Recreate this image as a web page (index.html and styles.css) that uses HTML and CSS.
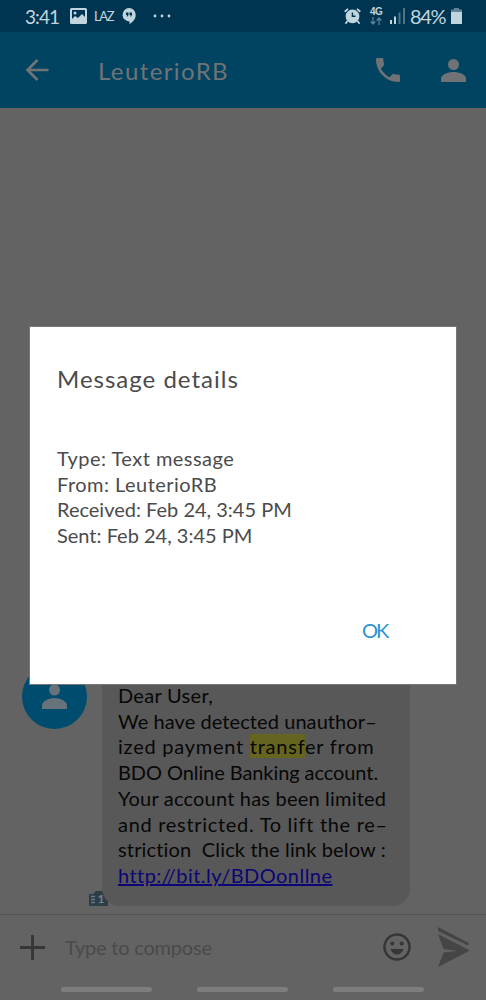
FILE: index.html
```html
<!DOCTYPE html>
<html lang="en">
<head>
<meta charset="utf-8">
<title>Message details</title>
<link rel="stylesheet" href="styles.css">
</head>
<body>
<div class="phone">
  <div class="status">
    <span class="clock">3:41</span>
    <svg class="s-pic" width="17" height="16" viewBox="0 0 17 16"><path fill="currentColor" fill-rule="evenodd" d="M1.5 0h14Q17 0 17 1.500v13Q17 16 15.500 16h-14Q0 16 0 14.500v-13Q0 0 1.500 0zM2 2v9l3-3 3 2 4-4 3 3V2zM5 3.500a1.500 1.500 0 1 1 0 3 1.500 1.500 0 0 1 0-3z"/></svg>
    <span class="laz">LAZ</span>
    <svg class="s-chat" width="14" height="16" viewBox="0 0 14 16"><path fill="currentColor" fill-rule="evenodd" d="M7 0a6.700 6.700 0 0 1 6.700 6.700C13.700 11 11 14 7.500 16v-2.600A6.700 6.700 0 1 1 7 0zM4 4.500v2.500h1.200l-.6 1.500h1l.9-1.500v-2.500zM7.500 4.500v2.500h1.200l-.6 1.500h1l.9-1.500v-2.500z"/></svg>
    <svg class="s-dots" width="18" height="4" viewBox="0 0 18 4" fill="currentColor"><circle cx="2" cy="2" r="1.400"/><circle cx="9" cy="2" r="1.400"/><circle cx="16" cy="2" r="1.400"/></svg>
    <span class="grow"></span>
    <svg class="s-alarm" width="17" height="17" viewBox="0 0 17 17"><path fill="currentColor" fill-rule="evenodd" d="M8.500 1.500a6.900 6.900 0 1 1 0 13.800 6.900 6.900 0 0 1 0-13.800zM7.700 4.500v4.500h3.800V7.600H9.100V4.500z"/><path d="M.7 3.800 4 .9M16.300 3.800 13 .9M3.500 13 1.500 15.800M13.500 13l2 2.800" stroke="currentColor" stroke-width="1.800" fill="none"/></svg>
    <span class="net"><b>4G</b><svg width="12" height="8" viewBox="0 0 12 8"><path d="M3 0v7M.7 4.500 3 7l2.300-2.500M9 8V1M6.700 3.500 9 1l2.300 2.500" stroke="currentColor" stroke-width="1.200" fill="none" opacity=".5"/></svg></span>
    <svg class="s-bars" width="15" height="16" viewBox="0 0 15 16" fill="currentColor"><path d="M0 12h2v4H0zM4 8.500h2V16H4z"/><path opacity=".4" d="M8.500 4.500h2V16h-2zM13 0h2v16h-2z"/></svg>
    <span class="pct">84%</span>
    <svg class="s-bat" width="11" height="16" viewBox="0 0 11 16" fill="currentColor"><path d="M0 4h11v12H0z"/><path opacity=".5" d="M3 0h5v1.500h3V4H0V1.500h3z"/></svg>
  </div>
  <header class="bar">
    <svg class="back" width="24" height="24" viewBox="0 0 24 24"><path d="M23.500 12H2.500M12.500 2 2.500 12l10 10" fill="none" stroke="currentColor" stroke-width="2.700"/></svg>
    <h1 class="name">LeuterioRB</h1>
    <svg class="call" width="24" height="24" viewBox="3 3 18 18"><path fill="currentColor" d="M6.620 10.790c1.440 2.830 3.760 5.140 6.590 6.590l2.200-2.200c.27-.27.67-.36 1.020-.24 1.120.37 2.330.57 3.570.57.550 0 1 .450 1 1V20c0 .550-.450 1-1 1-9.390 0-17-7.610-17-17 0-.550.450-1 1-1h3.500c.55 0 1 .450 1 1 0 1.250.2 2.450.570 3.570.110.350.030.740-.250 1.020l-2.200 2.200z"/></svg>
    <svg class="person" width="25" height="23" viewBox="0 0 25 23" fill="currentColor"><circle cx="12.500" cy="5.500" r="5.500"/><path d="M0 23v-3.500C0 15.500 7 13 12.500 13S25 15.500 25 19.500V23z"/></svg>
  </header>
  <main class="thread">
    <div class="message">
      <div class="side">
        <div class="avatar"><svg width="25" height="25" viewBox="0 0 25 25" fill="currentColor"><circle cx="12.500" cy="6" r="5.500"/><path d="M0 25v-3.500C0 17 7 14 12.500 14S25 17 25 21.500V25z"/></svg></div>
        <svg class="sim" width="19" height="15" viewBox="0 0 19 15"><path class="sim-card" d="M0 3h4l3-3h12v15H0z"/><path class="sim-mark" d="M2 5.500h4M2 8.500h4M2 11.500h4"/><text class="sim-num" x="8.500" y="12">1</text></svg>
      </div>
      <div class="bubble">
        <div class="line l1">Dear User,</div>
        <div class="line l2">We have detected unauthor–</div>
        <div class="line l3">ized payment <mark>transf</mark>er from</div>
        <div class="line l4">BDO Online Banking account.</div>
        <div class="line l5">Your account has been limited</div>
        <div class="line l6">and restricted. To lift the re–</div>
        <div class="line l7">striction&nbsp; Click the link below :</div>
        <div class="line l8"><a class="link">http://bit.ly/BDOonllne</a></div>
      </div>
    </div>
  </main>
  <div class="compose">
    <svg class="plus" width="25" height="25" viewBox="0 0 25 25"><path d="M12.500 0v25M0 12.500h25" stroke="currentColor" stroke-width="2.800"/></svg>
    <span class="hint">Type to compose</span>
    <svg class="smile" width="28" height="28" viewBox="0 0 28 28"><circle cx="14" cy="14" r="12.500" fill="none" stroke="currentColor" stroke-width="2.500"/><circle cx="9.300" cy="10.500" r="2" fill="currentColor"/><circle cx="18.700" cy="10.500" r="2" fill="currentColor"/><path d="M7.500 16h13c-1 3.500-3.600 5.500-6.500 5.500S8.500 19.500 7.500 16z" fill="currentColor"/></svg>
    <svg class="send" width="34" height="40" viewBox="0 0 34 40"><path fill="currentColor" d="M1 0 32 16l-1 2.500L1 4zM1 7l32 16.500L1 40l5.500-14.500 14-1.500-14-2z"/></svg>
  </div>
  <nav class="nav"><i></i><i></i><i></i></nav>

  <section class="dialog">
    <h2 class="title">Message details</h2>
    <div class="details">
      <div class="d1">Type: Text message</div>
      <div class="d2">From: LeuterioRB</div>
      <div class="d3">Received: Feb 24, 3:45 PM</div>
      <div class="d4">Sent: Feb 24, 3:45 PM</div>
    </div>
    <button class="ok">OK</button>
  </section>
</div>
</body>
</html>
```
FILE: styles.css
```css
* { box-sizing: border-box; }
body { margin: 0; font-family: Lato, "Open Sans", sans-serif; font-variant-ligatures: none; }
svg { display: block; flex: none; }
h1, h2 { margin: 0; font-weight: 400; }
.phone { position: relative; width: 486px; height: 1000px; display: flex; flex-direction: column; background: #636363; overflow: hidden; white-space: nowrap; }

.status { height: 32px; display: flex; align-items: center; padding: 0 24px 0 25px; background: #003552; color: #c0d5de; }
.clock { width: 45px; font-size: 19px; letter-spacing: -0.9px; }
.laz { width: 29px; margin-left: 7px; font-size: 13px; letter-spacing: -1.4px; }
.s-chat { margin-left: -1px; }
.s-dots { margin-left: 17px; }
.grow { flex: 1; }
.net { width: 13px; margin-left: 9px; font: 10px/9px "Liberation Sans", sans-serif; letter-spacing: -0.5px; display: flex; flex-direction: column; gap: 1px; }
.s-bars { margin-left: 7px; }
.pct { width: 41px; margin-left: 5px; font-size: 20px; letter-spacing: -1.3px; }

.bar { height: 76px; display: flex; align-items: center; padding: 0 20px 0 25px; background: #004462; color: #707376; }
.name { width: 278px; margin-left: 49px; font-size: 24px; letter-spacing: 1.4px; }
.person { margin-left: 41px; }

.thread { flex: 1; display: flex; align-items: flex-end; padding: 0 0 8px 22px; }
.message { display: flex; height: 240px; }
.side { width: 80px; display: flex; flex-direction: column; justify-content: space-between; }
.avatar { width: 65px; height: 65px; margin-top: -2px; border-radius: 50%; background: #004c6f; color: #67737a; display: flex; align-items: center; justify-content: center; }
.sim { margin-left: 67px; }
.sim-card { fill: #2d3e47; }
.sim-mark { stroke: #687980; stroke-width: 1.500; }
.sim-num { fill: #75858b; font: bold 12px Lato, sans-serif; }
.bubble { width: 308px; padding: 17px 16px; border-radius: 0 0 18px 18px; background: #585858; color: #070707; font-size: 20px; line-height: 25.700px; }
.l1 { letter-spacing: 0.3px; }
.l2 { letter-spacing: 0.08px; }
.l3 { letter-spacing: 0.75px; }
.l4 { letter-spacing: -0.08px; }
.l5 { letter-spacing: 0.2px; }
.l6 { letter-spacing: 0.7px; }
.l7 { letter-spacing: 0.15px; }
.l8 { letter-spacing: 0.45px; }
mark { background: #65651f; color: inherit; }
.link { color: #0b0577; text-decoration: underline; }

.compose { height: 64px; display: flex; align-items: center; padding: 1px 15px 0 20px; border-top: 1px solid #555; color: #363636; }
.hint { flex: 1; margin-left: 20px; color: #4a4a4a; font-size: 20px; letter-spacing: -0.2px; }
.send { margin-left: 26px; color: #454545; }
.nav { height: 22px; display: flex; gap: 45px; padding: 9px 0 0 61px; }
.nav i { width: 91px; height: 5px; border-radius: 3px; background: #7d7d7d; }

.dialog { position: absolute; left: 30px; top: 327px; width: 426px; height: 357px; padding: 36px 27px 0; background: #fff; color: #4b4b4b; outline: 1px solid #777; display: flex; flex-direction: column; }
.title { font-size: 24px; line-height: 32px; letter-spacing: 1px; }
.details { margin-top: 51px; font-size: 20px; line-height: 25.600px; }
.d1, .d2 { letter-spacing: 0.47px; }
.ok { align-self: flex-start; margin: 70px 0 0 305px; padding: 0; border: 0; background: none; color: #2b91d3; font: 20px/24px Lato, sans-serif; letter-spacing: -2px; }
```
